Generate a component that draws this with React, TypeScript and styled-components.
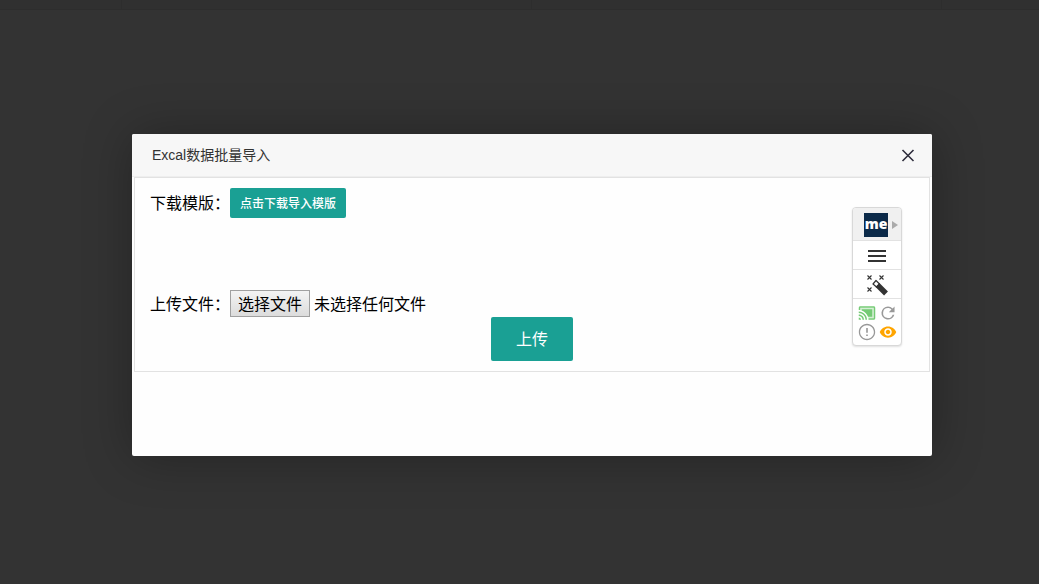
import React, { useState } from 'react';
import styled, { createGlobalStyle } from 'styled-components';

const GlobalStyle = createGlobalStyle`
  * { box-sizing: border-box; }
  body {
    margin: 0;
    background: #333;
    color: #000;
    font: 16px/24px "Liberation Sans", "Noto Sans CJK SC", sans-serif;
  }
  button { font-family: inherit; cursor: pointer; }
`;

const Overlay = styled.div`
  min-height: 100vh;
  display: flex;
  flex-direction: column;
`;

const BackdropBar = styled.div`
  height: 10px;
  display: grid;
  grid-template-columns: 122px 410px 410px 1fr;
  background: #303030;
  border-bottom: 1px solid #2d2d2d;
`;

const BackdropCell = styled.div`
  border-right: 1px solid #2d2d2d;
`;

const Stage = styled.div`
  flex: 1;
  display: flex;
  align-items: center;
  justify-content: center;
  padding: 0 0 4px 25px;
`;

const Dialog = styled.section`
  position: relative;
  width: 800px;
  max-width: 100%;
  min-height: 322px;
  background: #fefefe;
  border-radius: 2px;
  box-shadow: 1px 1px 50px rgba(0, 0, 0, 0.3);
`;

const Header = styled.header`
  height: 43px;
  display: flex;
  align-items: center;
  justify-content: space-between;
  padding: 0 16px 0 20px;
  background: #f7f7f7;
  border-bottom: 1px solid #eee;
  border-radius: 2px 2px 0 0;
`;

const Title = styled.h1`
  margin: 0;
  font-size: 14px;
  font-weight: 400;
  color: #333;
`;

const IconButton = styled.button`
  display: flex;
  padding: 0;
  border: 0;
  background: none;
`;

const Panel = styled.form`
  margin: 0 2px;
  padding: 10px 15px;
  border: 1px solid #e2e2e2;
  display: flex;
  flex-direction: column;
`;

const Row = styled.div<{ $gap?: number }>`
  display: flex;
  align-items: center;
  margin-bottom: ${(p) => p.$gap ?? 0}px;
`;

const RowText = styled.span`
  padding-top: 2px;
`;

const Button = styled.button<{ $large?: boolean }>`
  height: ${(p) => (p.$large ? 44 : 30)}px;
  padding: 0 ${(p) => (p.$large ? 25 : 10)}px 2px;
  font-size: ${(p) => (p.$large ? 16 : 12)}px;
  font-weight: ${(p) => (p.$large ? 400 : 500)};
  align-self: center;
  border: 0;
  border-radius: 2px;
  background: #1aa094;
  color: #fff;
  white-space: nowrap;
`;

const FileLabel = styled.label`
  display: flex;
  align-items: center;
  cursor: pointer;
`;

const FileInput = styled.input`
  width: 1px;
  height: 1px;
  margin: 0 -1px 0 0;
  opacity: 0;
`;

const Choose = styled.span`
  height: 27px;
  padding: 0 7px;
  margin-right: 4px;
  line-height: 27px;
  border: 1px solid #a0a0a0;
  background: linear-gradient(#f3f3f3, #dcdcdc);
`;

const Tools = styled.aside`
  position: absolute;
  top: 73px;
  right: 30px;
  width: 50px;
  border: 1px solid #d8d8d8;
  border-radius: 4px;
  background: #fff;
  box-shadow: 0 1px 2px rgba(0, 0, 0, 0.12);
  overflow: hidden;
`;

const ToolRow = styled.div<{ $tall?: boolean }>`
  height: ${(p) => (p.$tall ? 33 : 29)}px;
  display: flex;
  align-items: center;
  justify-content: center;
  padding-top: ${(p) => (p.$tall ? 1 : 2)}px;
  background: ${(p) => (p.$tall ? '#f0f0f0' : '#fff')};
  border-bottom: 1px solid #e2e2e2;
`;

const Brand = styled.button`
  width: 24px;
  height: 24px;
  margin: 0 4px 0 8px;
  padding: 0 0 2px;
  border: 0;
  background: #0c2a49;
  color: #fff;
  font: 800 14px/20px "Open Sans", sans-serif;
`;

const ToolGrid = styled.div`
  display: grid;
  grid-template-columns: 18px 18px;
  justify-content: center;
  gap: 1px 3px;
  padding: 5px 0 4px;
`;

const icons = {
  menu: 'M3 18h18v-2H3v2zm0-5h18v-2H3v2zm0-7v2h18V6H3z',
  cast: 'M1 18v3h3c0-1.66-1.34-3-3-3zm0-4v2c2.76 0 5 2.24 5 5h2c0-3.87-3.13-7-7-7zm18-7H5v1.63c3.96 1.28 7.09 4.41 8.37 8.37H19V7zM1 10v2c4.97 0 9 4.03 9 9h2c0-6.08-4.93-11-11-11zm20-7H3c-1.1 0-2 .9-2 2v3h2V5h18v14h-7v2h7c1.1 0 2-.9 2-2V5c0-1.1-.9-2-2-2z',
  refresh: 'M17.65 6.35A7.96 7.96 0 0 0 12 4a8 8 0 1 0 7.73 10h-2.08A6 6 0 1 1 12 6c1.66 0 3.14.69 4.22 1.78L13 11h7V4l-2.35 2.35z',
  alert: 'M11 15h2v2h-2zm0-8h2v6h-2zm.99-5C6.47 2 2 6.48 2 12s4.47 10 9.99 10C17.52 22 22 17.52 22 12S17.52 2 11.99 2zM12 20.4c-4.64 0-8.4-3.76-8.4-8.4s3.76-8.4 8.4-8.4 8.4 3.76 8.4 8.4-3.76 8.4-8.4 8.4z',
  eye: 'M12 4.5C7 4.5 2.73 7.61 1 12c1.73 4.39 6 7.5 11 7.5s9.27-3.11 11-7.5c-1.73-4.39-6-7.5-11-7.5zM12 17c-2.76 0-5-2.24-5-5s2.24-5 5-5 5 2.24 5 5-2.24 5-5 5zm0-8c-1.66 0-3 1.34-3 3s1.34 3 3 3 3-1.34 3-3-1.34-3-3-3z',
};

type IconProps = { name: keyof typeof icons; size: number; color: string; inset?: number };

const Icon = ({ name, size, color, inset = 0 }: IconProps) => (
  <svg
    width={size}
    height={size}
    viewBox={`${inset} ${inset} ${24 - inset * 2} ${24 - inset * 2}`}
    fill={color}
    aria-hidden="true"
  >
    {name === 'cast' && <path d="M3 5h18v14h-7C13 14 9 9 3 8z" opacity="0.3" />}
    <path d={icons[name]} />
  </svg>
);

const Wand = () => (
  <svg width="24" height="24" viewBox="0 0 24 24" fill="none" stroke="#333" aria-hidden="true">
    <path d="M2.5 2.5l4 4M6.5 2.5l-4 4M14.5 2.5l4 4M18.5 2.5l-4 4M2.5 14.5l4 4M6.5 14.5l-4 4" strokeWidth="1.1" />
    <path d="M8 11l3-3.5 3.5 3.5-3 3z" fill="#fff" strokeWidth="1.2" strokeLinejoin="round" />
    <path d="M12.5 12l8.5 8.5" strokeWidth="5.5" />
  </svg>
);

export default function App() {
  const [fileName, setFileName] = useState('未选择任何文件');

  return (
    <Overlay>
      <GlobalStyle />
      <BackdropBar><BackdropCell /><BackdropCell /><BackdropCell /></BackdropBar>
      <Stage>
        <Dialog role="dialog" aria-labelledby="dialog-title">
          <Header>
            <Title id="dialog-title">Excal数据批量导入</Title>
            <IconButton type="button" aria-label="关闭">
              <svg width="16" height="16" viewBox="0 0 16 16" stroke="#2e2d3c" strokeWidth="1.6" aria-hidden="true">
                <path d="M2.5 3l11 11M13.5 3l-11 11" />
              </svg>
            </IconButton>
          </Header>
          <Panel onSubmit={(e) => e.preventDefault()}>
            <Row $gap={72}>
              <RowText>下载模版：</RowText>
              <Button type="button">点击下载导入模版</Button>
            </Row>
            <Row>
              <FileLabel>
                <RowText>上传文件：</RowText>
                <FileInput
                  type="file"
                  onChange={(e) => setFileName(e.target.files?.[0]?.name ?? '未选择任何文件')}
                />
                <Choose>选择文件</Choose>
                <RowText>{fileName}</RowText>
              </FileLabel>
            </Row>
            <Button type="submit" $large>上传</Button>
          </Panel>
          <Tools aria-label="工具">
            <ToolRow $tall>
              <Brand type="button">me</Brand>
              <svg width="6" height="8" viewBox="0 0 6 8" fill="#aaa" aria-hidden="true"><path d="M0 0l6 4-6 4z" /></svg>
            </ToolRow>
            <ToolRow>
              <IconButton type="button" aria-label="菜单"><Icon name="menu" size={24} color="#333" /></IconButton>
            </ToolRow>
            <ToolRow>
              <IconButton type="button" aria-label="魔棒"><Wand /></IconButton>
            </ToolRow>
            <ToolGrid>
              <IconButton type="button" aria-label="投射">
                <Icon name="cast" size={18} color="#75cb75" />
              </IconButton>
              <IconButton type="button" aria-label="刷新"><Icon name="refresh" size={18} color="#999" inset={1} /></IconButton>
              <IconButton type="button" aria-label="提示"><Icon name="alert" size={18} color="#999" inset={1} /></IconButton>
              <IconButton type="button" aria-label="查看"><Icon name="eye" size={18} color="#ffa500" /></IconButton>
            </ToolGrid>
          </Tools>
        </Dialog>
      </Stage>
    </Overlay>
  );
}
